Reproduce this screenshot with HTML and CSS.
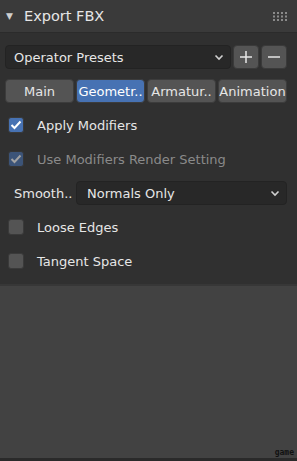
FILE: index.html
```html
<!DOCTYPE html>
<html lang="en">
<head>
  <meta charset="UTF-8">
  <title>Export FBX</title>
  <link rel="stylesheet" href="styles.css">
</head>
<body>
<div class="panel">
  <div class="header">
    <span class="tri">&#9660;</span>
    <span class="title">Export FBX</span>
    <span class="grip">
      <svg width="15" height="9" viewBox="0 0 15 9">
        <g fill="#8a8a8a">
          <rect x="0" y="0" width="2" height="2"/><rect x="4" y="0" width="2" height="2"/><rect x="8" y="0" width="2" height="2"/><rect x="12" y="0" width="2" height="2"/>
          <rect x="0" y="3.5" width="2" height="2"/><rect x="4" y="3.5" width="2" height="2"/><rect x="8" y="3.5" width="2" height="2"/><rect x="12" y="3.5" width="2" height="2"/>
          <rect x="0" y="7" width="2" height="2"/><rect x="4" y="7" width="2" height="2"/><rect x="8" y="7" width="2" height="2"/><rect x="12" y="7" width="2" height="2"/>
        </g>
      </svg>
    </span>
  </div>
  <div class="body">
    <div class="presets">
      <div class="select">
        <span>Operator Presets</span>
        <svg class="chev" width="10" height="7" viewBox="0 0 10 7"><path d="M1.5 1.5 L5 5 L8.5 1.5" fill="none" stroke="#d0d0d0" stroke-width="1.6"/></svg>
      </div>
      <div class="pm">
        <button class="sq"><svg width="14" height="14" viewBox="0 0 14 14"><path d="M7 1 V13 M1 7 H13" stroke="#e6e6e6" stroke-width="1.5"/></svg></button>
        <button class="sq"><svg width="14" height="14" viewBox="0 0 14 14"><path d="M1 7 H13" stroke="#e6e6e6" stroke-width="1.5"/></svg></button>
      </div>
    </div>
    <div class="tabs">
      <button class="tab">Main</button>
      <button class="tab on">Geometr..</button>
      <button class="tab">Armatur..</button>
      <button class="tab">Animation</button>
    </div>
    <label class="check"><span class="box on"><svg width="12" height="10" viewBox="0 0 12 10"><path d="M1.5 5 L4.5 8 L10.5 1.5" fill="none" stroke="#fff" stroke-width="2"/></svg></span>Apply Modifiers</label>
    <label class="check dim"><span class="box on"><svg width="12" height="10" viewBox="0 0 12 10"><path d="M1.5 5 L4.5 8 L10.5 1.5" fill="none" stroke="#fff" stroke-width="2"/></svg></span>Use Modifiers Render Setting</label>
    <div class="field">
      <span class="lbl">Smooth..</span>
      <div class="select wide">
        <span>Normals Only</span>
        <svg class="chev" width="10" height="7" viewBox="0 0 10 7"><path d="M1.5 1.5 L5 5 L8.5 1.5" fill="none" stroke="#d0d0d0" stroke-width="1.6"/></svg>
      </div>
    </div>
    <label class="check"><span class="box"></span>Loose Edges</label>
    <label class="check"><span class="box"></span>Tangent Space</label>
  </div>
</div>
<div class="rest">
  <span class="mark">game</span>
</div>
</body>
</html>
```

FILE: styles.css
```css
html, body { margin: 0; height: 100%; }
body { background: #424242; font-family: "DejaVu Sans", sans-serif; color: #e6e6e6; display: flex; flex-direction: column; }
.panel { background: #303030; border-bottom: 2px solid #373737; }
.header { height: 32px; display: flex; align-items: center; background: #3a3a3a; border-bottom: 1px solid #2b2b2b; padding: 0 9px 0 6px; }
.tri { font-size: 9px; color: #cfcfcf; width: 18px; }
.title { font-size: 14.5px; flex: 1; }
.grip { display: flex; }
.body { padding: 12px 10px 6px 5px; display: flex; flex-direction: column; }
.presets { display: flex; gap: 2px; height: 24px; }
.select { flex: 1; background: #282828; border: 1px solid #232323; border-radius: 4px; display: flex; align-items: center; padding: 0 6px 0 8px; font-size: 13px; box-sizing: border-box; }
.select span { flex: 1; }
.pm { display: flex; gap: 2px; }
.sq { width: 26px; height: 24px; background: #545454; border: 1px solid #3a3a3a; border-radius: 4px; padding: 0; display: flex; align-items: center; justify-content: center; }
.tabs { display: flex; gap: 2px; margin-top: 10px; height: 24px; }
.tab { flex: 1; background: #545454; border: 1px solid #3c3c3c; border-radius: 4px; color: #e6e6e6; font-size: 13px; padding: 0; font-family: "DejaVu Sans", sans-serif; white-space: nowrap; overflow: hidden; }
.tab.on { background: #4772b3; color: #fff; }
.check { display: flex; align-items: center; height: 34px; font-size: 13px; }
.tabs + .check { margin-top: 5px; }
.box { width: 16px; height: 16px; box-sizing: border-box; background: #545454; border: 1px solid #3a3a3a; border-radius: 3px; margin: 0 13px 0 3px; display: flex; align-items: center; justify-content: center; }
.box.on { background: #4772b3; }
.dim { color: #8a8a8a; }
.dim .box { opacity: 0.55; }
.field { display: flex; align-items: center; height: 34px; }
.lbl { font-size: 13px; width: 71px; padding-left: 9px; box-sizing: border-box; }
.select.wide { height: 24px; padding-left: 10px; }
.rest { flex: 1; display: flex; align-items: flex-end; justify-content: flex-end; border-bottom: 3px solid #2a2a2a; }
.mark { font-family: "DejaVu Sans Mono", monospace; font-size: 8px; color: #111; font-weight: bold; padding: 0 3px 1px 0; }
```
